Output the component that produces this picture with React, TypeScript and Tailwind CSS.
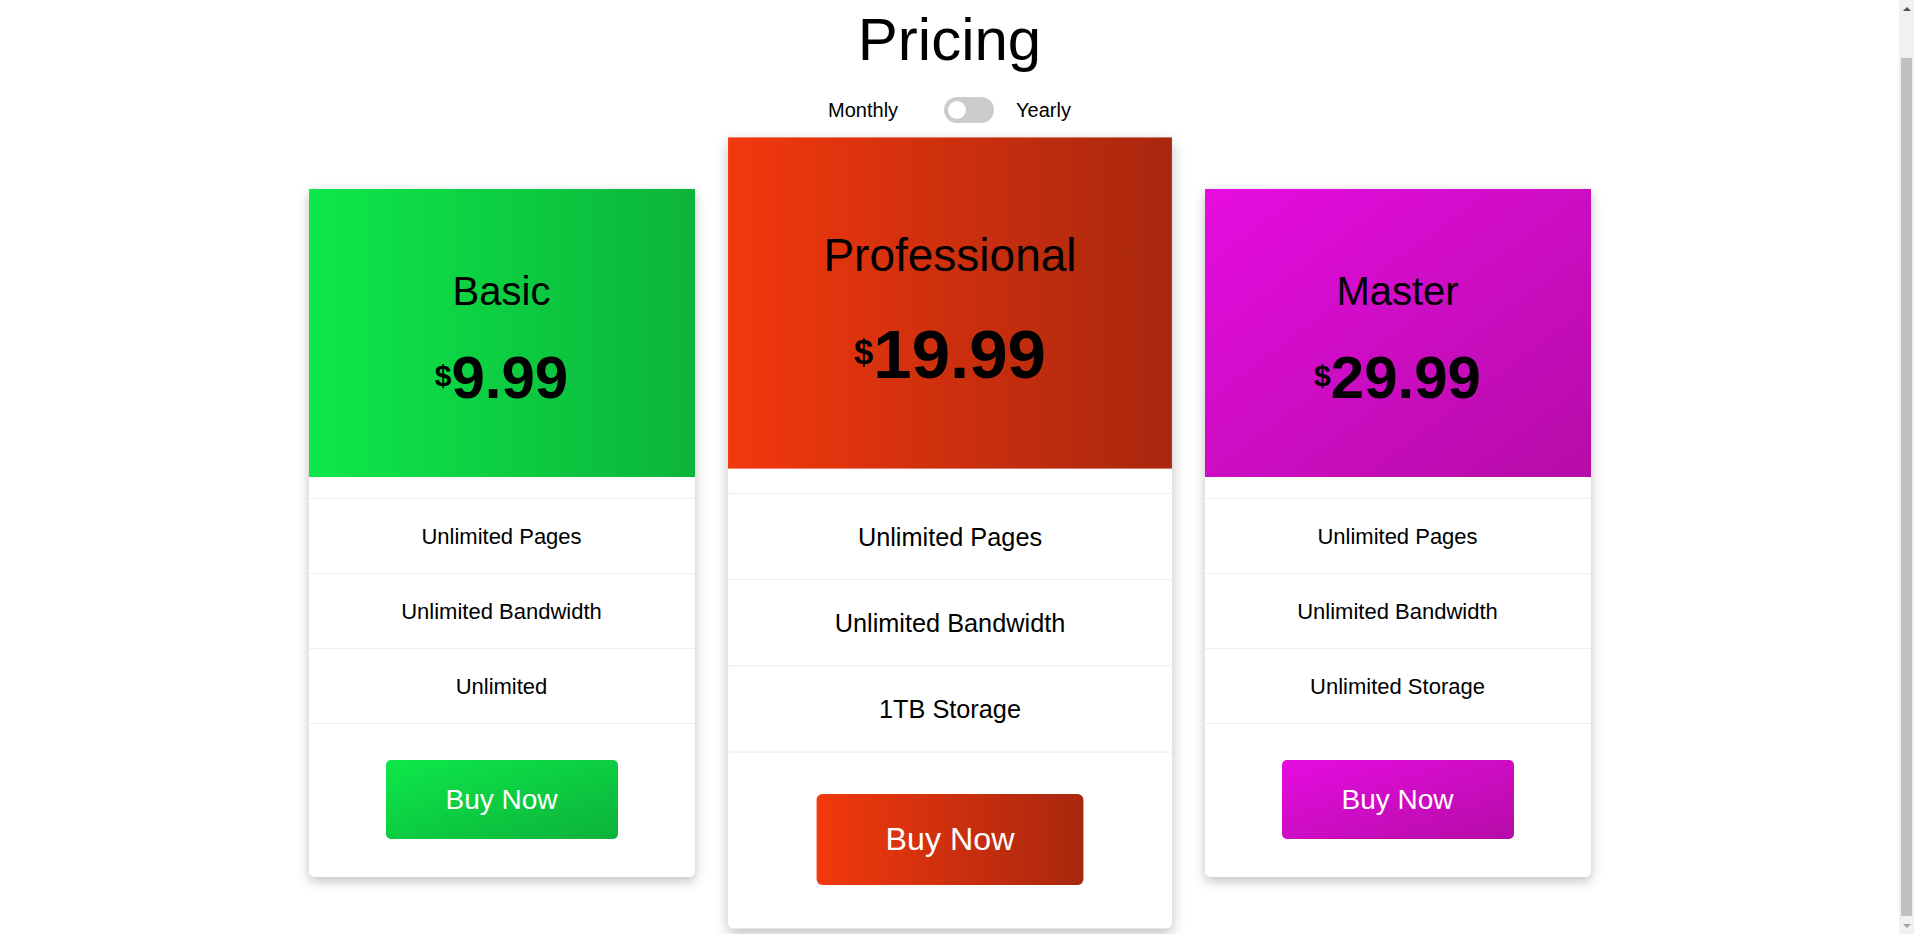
import { useState } from 'react';

type Plan = {
  id: string;
  name: string;
  price: string;
  features: string[];
  headerClass: string;
  buttonClass: string;
  featured?: boolean;
};

const PLANS: Plan[] = [
  {
    id: 'basic',
    name: 'Basic',
    price: '9.99',
    features: ['Unlimited Pages', 'Unlimited Bandwidth', 'Unlimited'],
    headerClass: 'bg-linear-to-r from-[#0de84a] to-[#0cb43a]',
    buttonClass: 'bg-linear-to-br from-[#0de84a] to-[#0cb23a]',
  },
  {
    id: 'professional',
    name: 'Professional',
    price: '19.99',
    features: ['Unlimited Pages', 'Unlimited Bandwidth', '1TB Storage'],
    headerClass: 'bg-linear-to-r from-[#f3380d] to-[#a8270e]',
    buttonClass: 'bg-linear-to-r from-[#f3380d] to-[#a8270e]',
    featured: true,
  },
  {
    id: 'master',
    name: 'Master',
    price: '29.99',
    features: ['Unlimited Pages', 'Unlimited Bandwidth', 'Unlimited Storage'],
    headerClass: 'bg-linear-to-br from-[#e60ce1] to-[#b50ca7]',
    buttonClass: 'bg-linear-to-br from-[#e60ce1] to-[#b50ca7]',
  },
];

function PriceCard({ plan }: { plan: Plan }) {
  return (
    <div
      className={`w-[386px] shrink-0 rounded-[5px] bg-white shadow-[0_4px_12px_rgba(0,0,0,0.25)] ${
        plan.featured ? 'relative z-10 scale-[1.15]' : ''
      }`}
    >
      <div
        className={`flex h-[288px] flex-col items-center pt-[79px] ${plan.headerClass}`}
      >
        <h2 className="text-[40px] leading-[46px] font-normal">{plan.name}</h2>
        <p className="mt-[25px] text-[60px] leading-[74px] font-bold">
          <span className="align-[12px] text-[30px]">$</span>
          {plan.price}
        </p>
      </div>

      <ul className="mt-[21px] border-b border-[#eee]">
        {plan.features.map((f) => (
          <li
            key={f}
            className="flex h-[75px] items-center justify-center border-t border-[#eee] text-[22px]"
          >
            {f}
          </li>
        ))}
      </ul>

      <div className="flex justify-center pt-[36px] pb-[38px]">
        <button
          type="button"
          className={`h-[79px] w-[232px] rounded-[5px] text-[28px] text-white ${plan.buttonClass}`}
        >
          Buy Now
        </button>
      </div>
    </div>
  );
}

// the reference shows the browser's classic scrollbar, so draw it as a strip
function FakeScrollbar() {
  return (
    <div className="fixed top-0 right-0 flex h-screen w-[15px] flex-col items-center bg-[#f1f1f1]">
      <div className="flex h-[17px] items-center justify-center">
        <span className="h-0 w-0 border-x-[4px] border-b-[4px] border-x-transparent border-b-[#505050]" />
      </div>
      <div className="mt-[41px] h-[858px] w-[11px] bg-[#c1c1c1]" />
      <div className="mt-auto flex h-[17px] items-center justify-center">
        <span className="h-0 w-0 border-x-[4px] border-t-[4px] border-x-transparent border-t-[#a3a3a3]" />
      </div>
    </div>
  );
}

export default function App() {
  const [yearly, setYearly] = useState(false);

  return (
    <div className="min-h-[978px] bg-white pr-[15px] font-['Liberation_Sans',Arial,sans-serif] text-black">
      <h1 className="pt-[5px] text-center text-[60px] leading-[69px] font-normal">
        Pricing
      </h1>

      <div className="mt-[23px] flex h-[26px] items-center justify-center text-[20px]">
        <span>Monthly</span>
        <button
          type="button"
          aria-label="Toggle billing period"
          onClick={() => setYearly((v) => !v)}
          className={`mr-[22px] ml-[46px] flex h-[26px] w-[50px] items-center rounded-full px-[4px] ${
            yearly ? 'justify-end bg-[#0cb43a]' : 'justify-start bg-[#ccc]'
          }`}
        >
          <span className="h-[18px] w-[18px] rounded-full bg-white" />
        </button>
        <span>Yearly</span>
      </div>

      <div className="mt-[66px] flex items-start justify-center gap-[62px]">
        {PLANS.map((p) => (
          <PriceCard key={p.id} plan={p} />
        ))}
      </div>

      <FakeScrollbar />
    </div>
  );
}
